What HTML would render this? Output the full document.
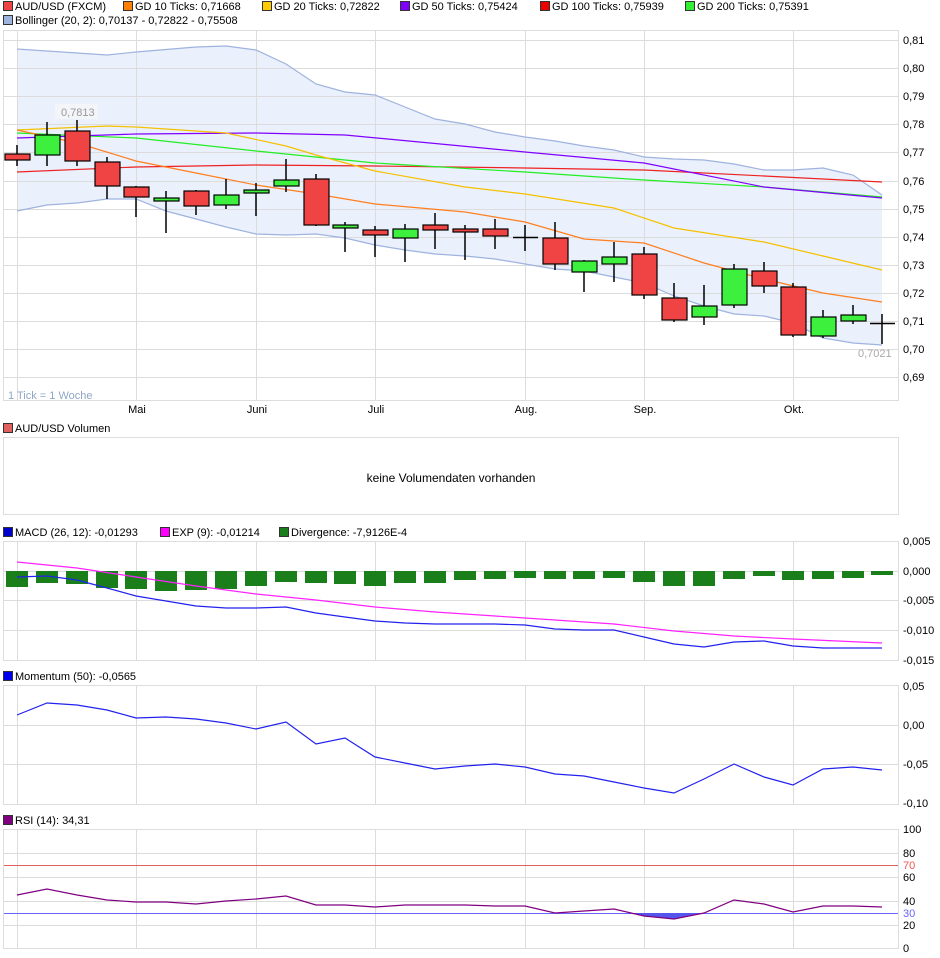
<!DOCTYPE html>
<html><head><meta charset="utf-8"><style>
body{margin:0;background:#fff;}
svg{display:block;font-family:"Liberation Sans",sans-serif;font-size:11px;}
</style></head><body>
<svg width="940" height="958" viewBox="0 0 940 958" xmlns="http://www.w3.org/2000/svg">
<!-- legends -->
<g font-size="11" fill="#000">
<rect x="3.5" y="1.5" width="9" height="9" fill="#f04444" stroke="#333"/><text x="15" y="10">AUD/USD (FXCM)</text>
<rect x="123.5" y="1.5" width="9" height="9" fill="#ff7f00" stroke="#333"/><text x="135" y="10">GD 10 Ticks: 0,71668</text>
<rect x="262.5" y="1.5" width="9" height="9" fill="#ffcc00" stroke="#333"/><text x="274" y="10">GD 20 Ticks: 0,72822</text>
<rect x="400.5" y="1.5" width="9" height="9" fill="#8000ff" stroke="#333"/><text x="412" y="10">GD 50 Ticks: 0,75424</text>
<rect x="540.5" y="1.5" width="9" height="9" fill="#ee0000" stroke="#333"/><text x="552" y="10">GD 100 Ticks: 0,75939</text>
<rect x="685.5" y="1.5" width="9" height="9" fill="#33ee33" stroke="#333"/><text x="697" y="10">GD 200 Ticks: 0,75391</text>
<rect x="3.5" y="15.5" width="9" height="9" fill="#9fb3df" stroke="#333"/><text x="15" y="24">Bollinger (20, 2): 0,70137 - 0,72822 - 0,75508</text>
<rect x="3.5" y="423.5" width="9" height="9" fill="#e06060" stroke="#333"/><text x="15" y="432">AUD/USD Volumen</text>
<rect x="3.5" y="527.5" width="9" height="9" fill="#0000cc" stroke="#333"/><text x="15" y="536">MACD (26, 12): -0,01293</text>
<rect x="160.5" y="527.5" width="9" height="9" fill="#ff00ff" stroke="#333"/><text x="172" y="536">EXP (9): -0,01214</text>
<rect x="279.5" y="527.5" width="9" height="9" fill="#1a7f1a" stroke="#333"/><text x="291" y="536">Divergence: -7,9126E-4</text>
<rect x="3.5" y="671.5" width="9" height="9" fill="#0000ee" stroke="#333"/><text x="15" y="680">Momentum (50): -0,0565</text>
<rect x="3.5" y="815.5" width="9" height="9" fill="#800080" stroke="#333"/><text x="15" y="824">RSI (14): 34,31</text>
</g>

<!-- main panel -->
<rect x="3.5" y="30.5" width="895" height="370" fill="#fff" stroke="#ddd"/>
<polygon fill="#eaf0fc" points="17,49 77,53 107,55 136,52 196,47 226,46 256,50 286,64 316,84 345,92 375,95 405,107 435,119 465,124 495,132 525,137 555,141 584,146 614,150 644,157 674,159 704,160 734,164 764,170 793,170 823,168 853,175 882,195 882,345 853,343 823,338 793,323 764,316 734,314 704,306 674,296 644,283 614,277 584,271 555,269 525,264 495,259 465,256 435,254 405,250 375,245 345,238 316,234 286,235 256,234 226,227 196,219 166,211 136,199 107,199 77,203 47,205 17,211"/>
<g stroke="#dcdcdc" stroke-width="1">
<path d="M4 40.5H898M4 68.5H898M4 96.5H898M4 124.5H898M4 152.5H898M4 181.5H898M4 209.5H898M4 237.5H898M4 265.5H898M4 293.5H898M4 321.5H898M4 349.5H898M4 377.5H898"/>
<path d="M17.5 31V400M136.5 31V400M256.5 31V400M375.5 31V400M525.5 31V400M644.5 31V400M793.5 31V400"/>
</g>
<g fill="none" stroke-width="1.2">
<polyline stroke="#9fb3df" points="17,49 77,53 107,55 136,52 196,47 226,46 256,50 286,64 316,84 345,92 375,95 405,107 435,119 465,124 495,132 525,137 555,141 584,146 614,150 644,157 674,159 704,160 734,164 764,170 793,170 823,168 853,175 882,195"/>
<polyline stroke="#9fb3df" points="17,211 47,205 77,203 107,199 136,199 166,211 196,219 226,227 256,234 286,235 316,234 345,238 375,245 405,250 435,254 465,256 495,259 525,264 555,269 584,271 614,277 644,283 674,296 704,306 734,314 764,316 793,323 823,338 853,343 882,345"/>
<polyline stroke="#ee2222" points="17,172 136,167 256,165 375,166 525,168 644,170 764,176 882,182"/>
<polyline stroke="#22ee22" points="17,133 136,138 256,151 375,163 525,172 644,180 764,187 882,197"/>
<polyline stroke="#8000ff" points="17,138 136,134 256,133 345,135 525,152 644,163 764,187 882,198"/>
<polyline stroke="#f5c000" points="17,130 107,126 136,127 226,133 286,146 316,155 375,171 465,187 525,194 614,208 674,228 764,242 823,256 882,270"/>
<polyline stroke="#ff7f1f" points="17,130 77,143 136,161 196,173 256,185 316,194 375,204 465,212 525,222 584,239 644,243 704,263 764,279 823,293 882,302"/>
</g>
<g stroke="#000" stroke-width="1.5">
<path d="M17 145V166M47 122V166M77 120V166M107 157V199M136 186V217M166 191V233M196 190V215M226 179V209M256 183V216M286 159V192M316 174V226M345 222V252M375 226V257M405 224V262M435 213V249M465 225V260M495 219V249M525 225V251M555 222V270M584 260V292M614 242V282M644 247V299M674 283V322M704 285V325M734 264V308M764 262V293M793 283V337M823 310V338M853 305V324M882 314V344"/>
<path d="M513 237.5H538M870 323.5H895"/>
</g>
<g stroke="#000" stroke-width="1.2">
<rect x="5" y="154" width="25" height="6" fill="#f04444"/>
<rect x="35" y="135" width="25" height="20" fill="#3ef03e"/>
<rect x="65" y="131" width="25" height="30" fill="#f04444"/>
<rect x="95" y="162" width="25" height="24" fill="#f04444"/>
<rect x="124" y="187" width="25" height="10" fill="#f04444"/>
<rect x="154" y="198" width="25" height="3" fill="#3ef03e"/>
<rect x="184" y="191" width="25" height="15" fill="#f04444"/>
<rect x="214" y="195" width="25" height="10" fill="#3ef03e"/>
<rect x="244" y="190" width="25" height="3" fill="#3ef03e"/>
<rect x="274" y="180" width="25" height="6" fill="#3ef03e"/>
<rect x="304" y="179" width="25" height="46" fill="#f04444"/>
<rect x="333" y="225" width="25" height="3" fill="#3ef03e"/>
<rect x="363" y="230" width="25" height="5" fill="#f04444"/>
<rect x="393" y="229" width="25" height="9" fill="#3ef03e"/>
<rect x="423" y="225" width="25" height="5" fill="#f04444"/>
<rect x="453" y="229" width="25" height="3" fill="#f04444"/>
<rect x="483" y="229" width="25" height="7" fill="#f04444"/>
<rect x="543" y="238" width="25" height="26" fill="#f04444"/>
<rect x="572" y="261" width="25" height="11" fill="#3ef03e"/>
<rect x="602" y="257" width="25" height="7" fill="#3ef03e"/>
<rect x="632" y="254" width="25" height="41" fill="#f04444"/>
<rect x="662" y="298" width="25" height="22" fill="#f04444"/>
<rect x="692" y="306" width="25" height="11" fill="#3ef03e"/>
<rect x="722" y="269" width="25" height="36" fill="#3ef03e"/>
<rect x="752" y="271" width="25" height="15" fill="#f04444"/>
<rect x="781" y="287" width="25" height="48" fill="#f04444"/>
<rect x="811" y="317" width="25" height="19" fill="#3ef03e"/>
<rect x="841" y="315" width="25" height="6" fill="#3ef03e"/>
</g>
<rect x="55" y="104" width="43" height="15" fill="#f3f5f8"/>
<text x="61" y="116" fill="#999">0,7813</text>
<text x="858" y="357" fill="#aaa">0,7021</text>
<text x="8" y="399" fill="#8fa6c8">1 Tick = 1 Woche</text>
<g fill="#000">
<text x="903" y="44">0,81</text><text x="903" y="72">0,80</text><text x="903" y="100">0,79</text><text x="903" y="128">0,78</text><text x="903" y="156">0,77</text><text x="903" y="185">0,76</text><text x="903" y="213">0,75</text><text x="903" y="241">0,74</text><text x="903" y="269">0,73</text><text x="903" y="297">0,72</text><text x="903" y="325">0,71</text><text x="903" y="353">0,70</text><text x="903" y="381">0,69</text>
<g text-anchor="middle"><text x="137" y="413">Mai</text><text x="257" y="413">Juni</text><text x="376" y="413">Juli</text><text x="526" y="413">Aug.</text><text x="645" y="413">Sep.</text><text x="794" y="413">Okt.</text></g>
</g>

<!-- volume -->
<rect x="3.5" y="437.5" width="895" height="77" fill="#fff" stroke="#ddd"/>
<text x="451" y="482" text-anchor="middle" font-size="12">keine Volumendaten vorhanden</text>

<!-- MACD -->
<rect x="3.5" y="541.5" width="895" height="119" fill="#fff" stroke="#ddd"/>
<g stroke="#dcdcdc"><path d="M4 571.5H898M4 600.5H898M4 630.5H898M17.5 542V660M136.5 542V660M256.5 542V660M375.5 542V660M525.5 542V660M644.5 542V660M793.5 542V660"/></g>
<g fill="#1a7f1a">
<rect x="6" y="571" width="22" height="16"/><rect x="36" y="571" width="22" height="12"/><rect x="66" y="571" width="22" height="13"/><rect x="96" y="571" width="22" height="17"/><rect x="125" y="571" width="22" height="18"/><rect x="155" y="571" width="22" height="20"/><rect x="185" y="571" width="22" height="19"/><rect x="215" y="571" width="22" height="18"/><rect x="245" y="571" width="22" height="15"/><rect x="275" y="571" width="22" height="11"/><rect x="305" y="571" width="22" height="12"/><rect x="334" y="571" width="22" height="13"/><rect x="364" y="571" width="22" height="15"/><rect x="394" y="571" width="22" height="12"/><rect x="424" y="571" width="22" height="12"/><rect x="454" y="571" width="22" height="9"/><rect x="484" y="571" width="22" height="8"/><rect x="514" y="571" width="22" height="7"/><rect x="544" y="571" width="22" height="8"/><rect x="573" y="571" width="22" height="8"/><rect x="603" y="571" width="22" height="7"/><rect x="633" y="571" width="22" height="11"/><rect x="663" y="571" width="22" height="15"/><rect x="693" y="571" width="22" height="15"/><rect x="723" y="571" width="22" height="8"/><rect x="753" y="571" width="22" height="5"/><rect x="782" y="571" width="22" height="9"/><rect x="812" y="571" width="22" height="8"/><rect x="842" y="571" width="22" height="7"/><rect x="871" y="571" width="22" height="4"/>
</g>
<polyline fill="none" stroke="#ff22ff" stroke-width="1.2" points="17,562 77,568 136,577 196,586 256,594 316,600 375,607 435,612 495,616 555,620 614,624 674,631 734,636 793,639 882,643"/>
<polyline fill="none" stroke="#2222ee" stroke-width="1.2" points="17,577 47,576 77,580 107,588 136,596 166,601 196,606 226,608 256,608 286,607 316,613 345,617 375,621 405,623 435,624 465,624 495,624 525,625 555,629 584,630 614,630 644,637 674,644 704,647 734,642 764,641 793,646 823,648 853,648 882,648"/>
<g><text x="903" y="545">0,005</text><text x="903" y="575">0,000</text><text x="903" y="604">-0,005</text><text x="903" y="634">-0,010</text><text x="903" y="664">-0,015</text></g>

<!-- Momentum -->
<rect x="3.5" y="685.5" width="895" height="119" fill="#fff" stroke="#ddd"/>
<g stroke="#dcdcdc"><path d="M4 725.5H898M4 764.5H898M17.5 686V804M136.5 686V804M256.5 686V804M375.5 686V804M525.5 686V804M644.5 686V804M793.5 686V804"/></g>
<polyline fill="none" stroke="#2222ee" stroke-width="1.2" points="17,715 47,703 77,705 107,710 136,718 166,717 196,719 226,723 256,729 286,722 316,744 345,738 375,757 405,763 435,769 465,766 495,764 525,767 555,774 584,776 614,782 644,788 674,793 704,779 734,764 764,777 793,785 823,769 853,767 882,770"/>
<g><text x="903" y="690">0,05</text><text x="903" y="729">0,00</text><text x="903" y="768">-0,05</text><text x="903" y="807">-0,10</text></g>

<!-- RSI -->
<rect x="3.5" y="829.5" width="895" height="119" fill="#fff" stroke="#ddd"/>
<g stroke="#dcdcdc"><path d="M4 853.5H898M4 877.5H898M4 901.5H898M4 925.5H898M17.5 830V948M136.5 830V948M256.5 830V948M375.5 830V948M525.5 830V948M644.5 830V948M793.5 830V948"/></g>
<path d="M4 865.5H898" stroke="#e06060"/>
<path d="M4 913.5H898" stroke="#6666ff"/>
<polygon fill="#5555ee" points="626,913 644,916 674,919 700,913"/>
<polyline fill="none" stroke="#800080" stroke-width="1.2" points="17,895 47,889 77,895 107,900 136,902 166,902 196,904 226,901 256,899 286,896 316,905 345,905 375,907 405,905 435,905 465,905 495,906 525,906 555,913 584,911 614,909 644,916 674,919 704,913 734,900 764,904 793,912 823,906 853,906 882,907"/>
<g><text x="903" y="833">100</text><text x="903" y="857">80</text><text x="903" y="869" fill="#ee5555">70</text><text x="903" y="881">60</text><text x="903" y="905">40</text><text x="903" y="917" fill="#6666ff">30</text><text x="903" y="929">20</text><text x="903" y="952">0</text></g>
</svg>
</body></html>
